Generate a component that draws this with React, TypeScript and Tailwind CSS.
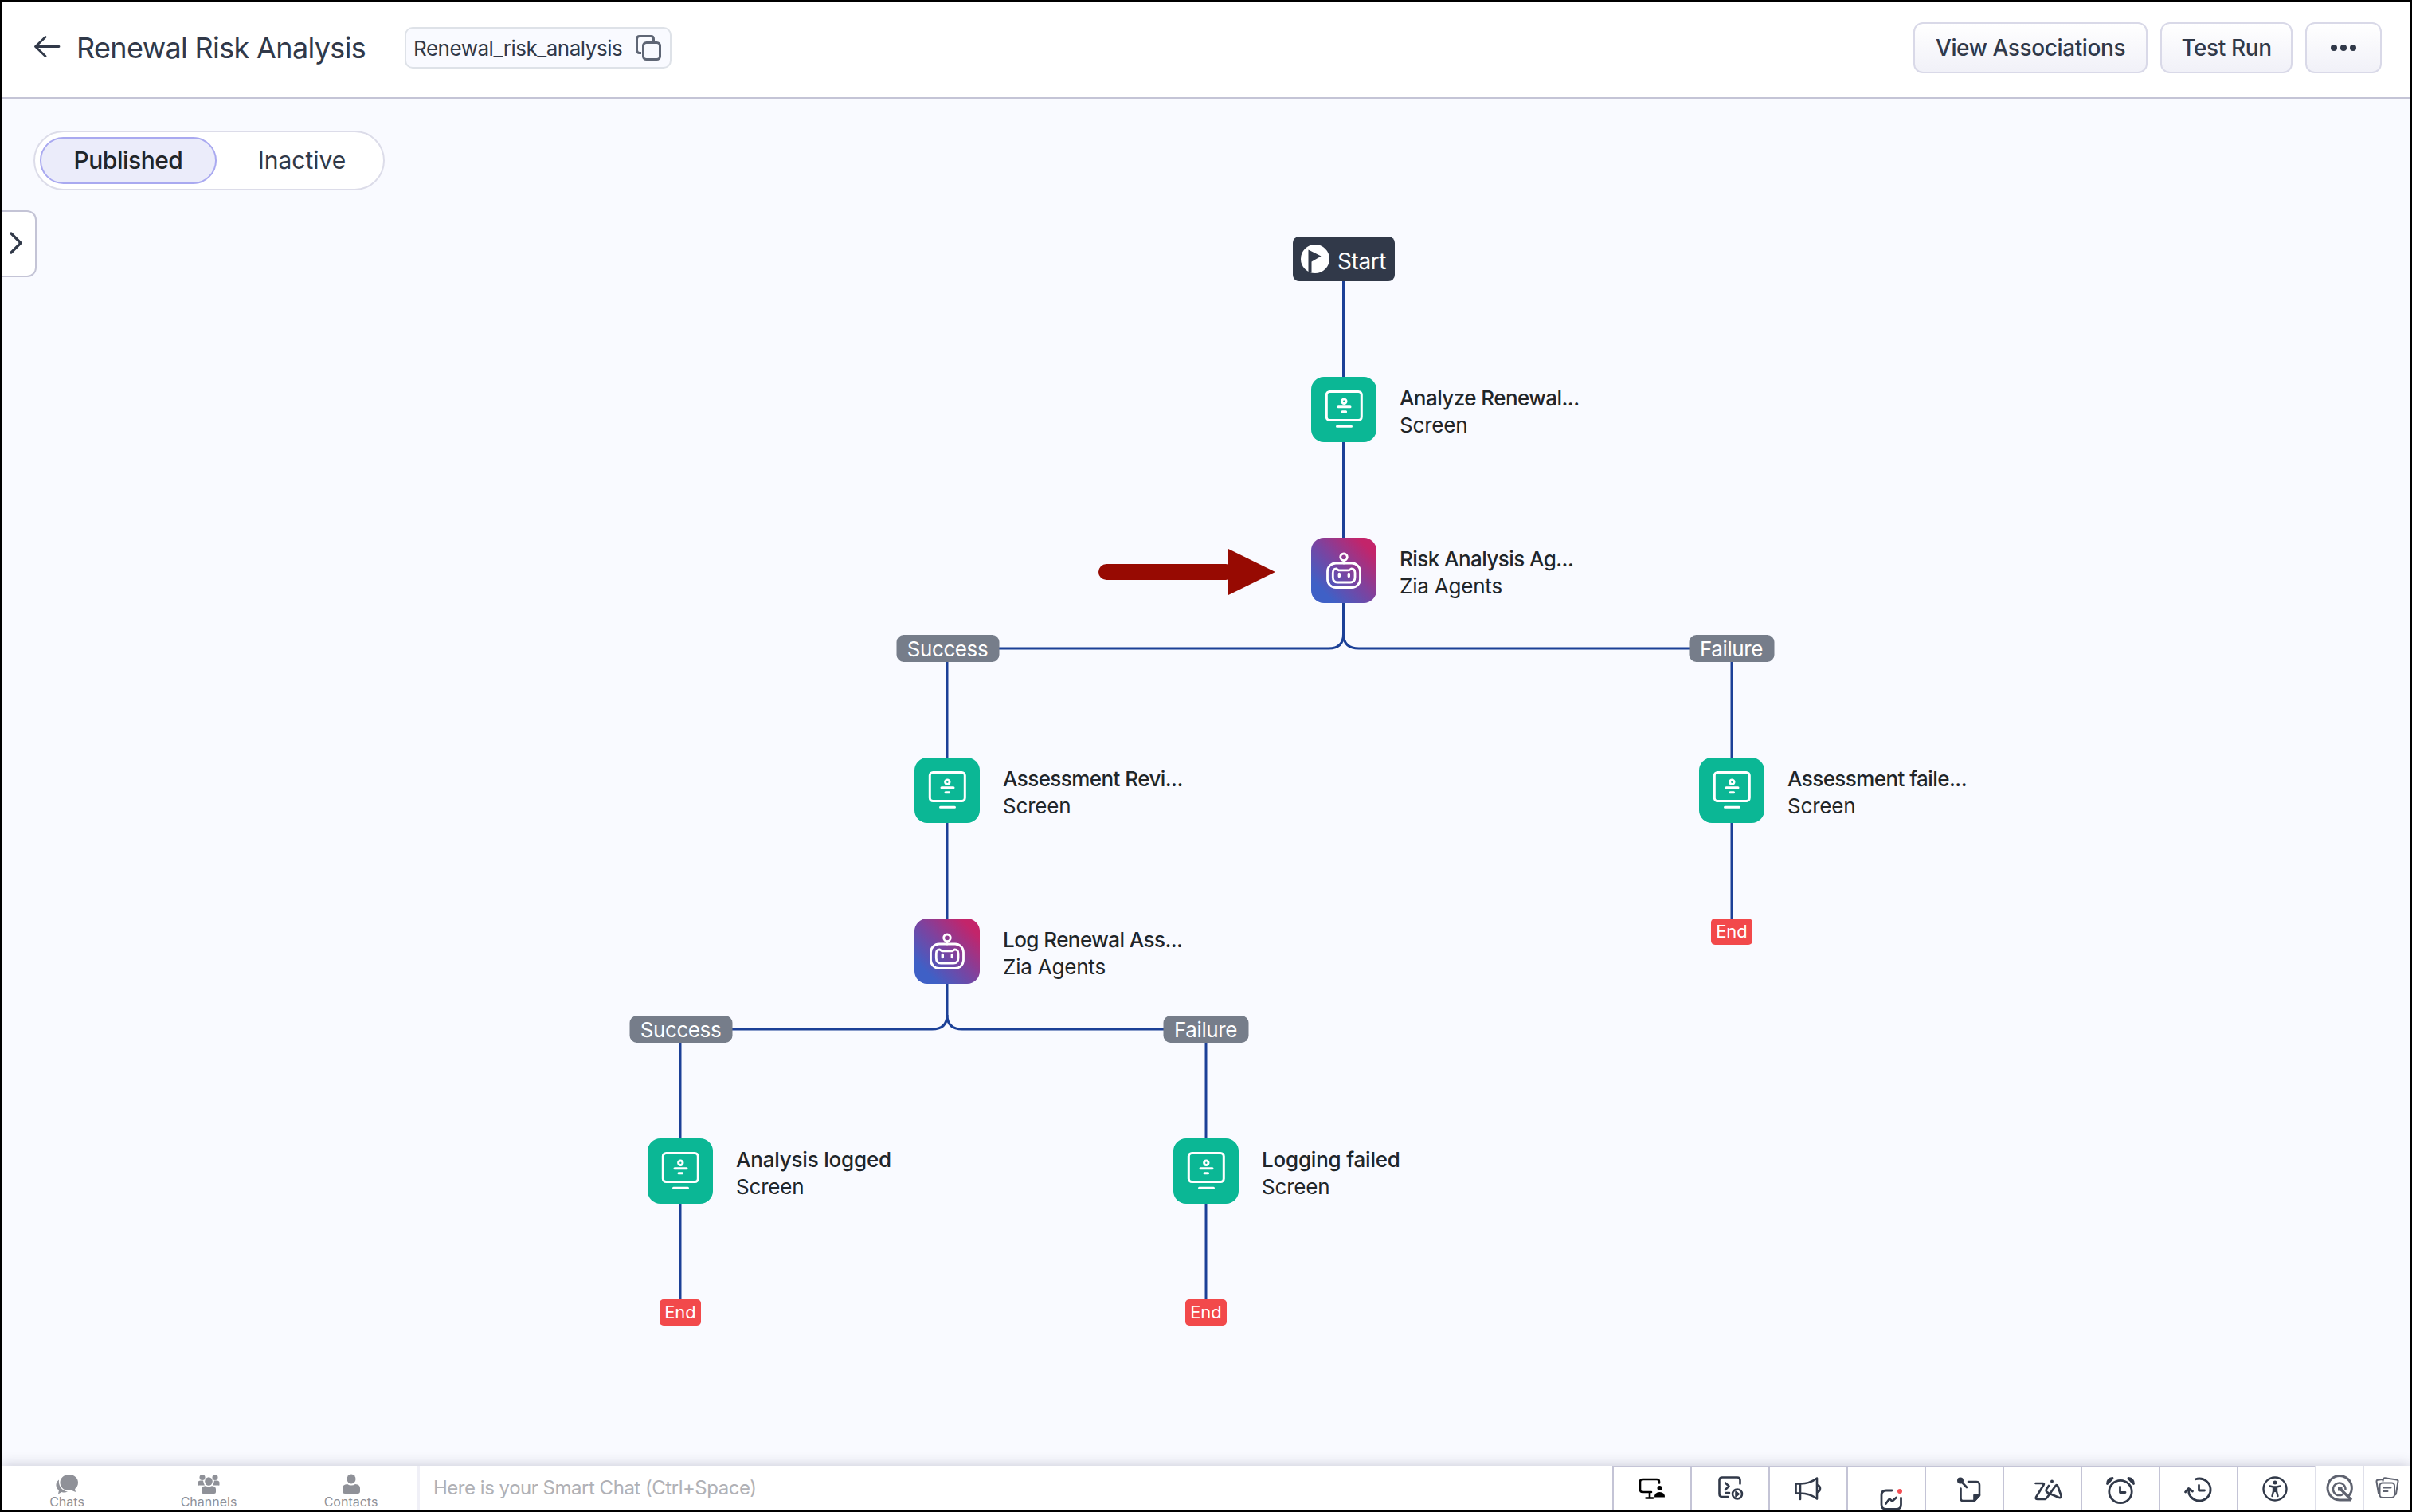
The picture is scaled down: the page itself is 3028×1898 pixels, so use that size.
import type { ReactNode } from 'react';

// ---------------------------------------------------------------------------
// Types
// ---------------------------------------------------------------------------

type NodeKind = 'screen' | 'agent';

interface FlowNodeData {
  id: string;
  kind: NodeKind;
  title: string;
  x: number;
  y: number;
}

interface TagData {
  id: string;
  label: string;
  x: number;
  y: number;
}

// ---------------------------------------------------------------------------
// Flow data. x is the centre line of an item, y its top edge
// ---------------------------------------------------------------------------

const NODES: FlowNodeData[] = [
  { id: 'analyze', kind: 'screen', title: 'Analyze Renewal...', x: 1685, y: 349 },
  { id: 'risk', kind: 'agent', title: 'Risk Analysis Ag...', x: 1685, y: 551 },
  { id: 'review', kind: 'screen', title: 'Assessment Revi...', x: 1187, y: 827 },
  { id: 'failed', kind: 'screen', title: 'Assessment faile...', x: 2172, y: 827 },
  { id: 'log', kind: 'agent', title: 'Log Renewal Ass...', x: 1187, y: 1029 },
  { id: 'logged', kind: 'screen', title: 'Analysis logged', x: 852, y: 1305 },
  { id: 'logging-failed', kind: 'screen', title: 'Logging failed', x: 1512, y: 1305 },
];

const BRANCHES: TagData[] = [
  { id: 'b1', label: 'Success', x: 1187.5, y: 673 },
  { id: 'b2', label: 'Failure', x: 2171.5, y: 673 },
  { id: 'b3', label: 'Success', x: 852.5, y: 1151 },
  { id: 'b4', label: 'Failure', x: 1511.5, y: 1151 },
];

const ENDS: TagData[] = [
  { id: 'e1', label: 'End', x: 2172, y: 1029 },
  { id: 'e2', label: 'End', x: 852, y: 1507 },
  { id: 'e3', label: 'End', x: 1512, y: 1507 },
];

const LINKS = [
  'M1684.5 229V349',
  'M1684.5 431V551',
  'M1684.5 633V672Q1684.5 690 1666 690H1250',
  'M1684.5 672Q1684.5 690 1704 690H2120',
  'M1187 706V827',
  'M1187 909V1029',
  'M2172 706V827',
  'M2172 909V1029',
  'M1187 1111V1150Q1187 1168 1168 1168H915',
  'M1187 1150Q1187 1168 1206 1168H1460',
  'M852 1184V1305',
  'M852 1387V1507',
  'M1512 1184V1305',
  'M1512 1387V1507',
];

// ---------------------------------------------------------------------------
// Icons
// ---------------------------------------------------------------------------

function ScreenIcon() {
  return (
    <svg width="82" height="82" viewBox="0 0 82 82" fill="none" stroke="white" strokeWidth="3" strokeLinecap="round">
      <rect x="19.3" y="18.5" width="44" height="36" rx="4" />
      <circle cx="41.3" cy="30.7" r="2.7" />
      <path d="M34 37.7H49M39 43.8H43.6M32.5 62.3H50.5" />
    </svg>
  );
}

function AgentIcon() {
  return (
    <svg width="82" height="82" viewBox="0 0 82 82" fill="none" stroke="white" strokeWidth="2.8" strokeLinecap="round" strokeLinejoin="round">
      <circle cx="41" cy="24.3" r="4.3" />
      <path d="M41 29V32" />
      <rect x="20.5" y="32" width="41" height="30.5" rx="10.5" />
      <path d="M31.5 38.8L34.500 40.800H47.500L50.500 38.800Q55 39 55 44V49.500Q55 56 49 56H33Q27.300 56 27.300 49.500V44Q27.300 39 31.500 38.800Z" />
      <path d="M35.3 45.5V48.5M47.3 45.5V48.5" strokeWidth="3.4" />
    </svg>
  );
}

function CopyIcon() {
  return (
    <svg width="34" height="34" viewBox="0 0 34 34" fill="none" stroke="#5f6675" strokeWidth="3">
      <rect x="10.5" y="10.5" width="21" height="21" rx="4" />
      <path d="M8 23.5H6Q2.5 23.5 2.5 20V6Q2.5 2.5 6 2.5H20Q23.5 2.5 23.5 6V8" />
    </svg>
  );
}

function PresenterIcon() {
  return (
    <svg width="36" height="36" viewBox="0 0 36 36" fill="none" stroke="black" strokeWidth="2.6" strokeLinecap="round">
      <path d="M17 21H6Q3 21 3 18V8Q3 5 6 5H24Q27 5 27 8V9.5M15 21V28M10.5 28.5H19" />
      <circle cx="27.5" cy="16" r="3" fill="black" stroke="none" />
      <path d="M21 27.5Q21 21 27.5 21T34 27.5Z" fill="black" stroke="none" />
    </svg>
  );
}

function ScriptRunIcon() {
  return (
    <svg width="36" height="36" viewBox="0 0 36 36" fill="none" stroke="#313949" strokeWidth="2.6" strokeLinecap="round" strokeLinejoin="round">
      <path d="M14.5 28H7Q3.5 28 3.5 24.5V7Q3.5 3.5 7 3.5H26Q29.5 3.5 29.5 7V11.5M11 10.5L15.5 14.5L11 19M11.5 23H16" />
      <circle cx="26" cy="24.5" r="6" />
      <path d="M24 21V28L28.5 24.5Z" strokeWidth="1.5" fill="#313949" />
    </svg>
  );
}

function MegaphoneIcon() {
  return (
    <svg width="36" height="36" viewBox="0 0 36 36" fill="none" stroke="#313949" strokeWidth="2.6" strokeLinecap="round" strokeLinejoin="round">
      <path d="M2.5 11.5V23.5H8Q20 23.5 29 30.5V4.5Q20 11.5 8 11.5ZM8 11.5V31M29 13Q33 14 33 17.5T29 22.5" />
    </svg>
  );
}

function TrendIcon() {
  return (
    <svg width="36" height="36" viewBox="0 0 36 36" fill="none" stroke="#313949" strokeWidth="2.8" strokeLinecap="round" strokeLinejoin="round">
      <path d="M18 5H11Q5 5 5 11V22.5Q5 28.5 11 28.5H23.5Q29.5 28.5 29.5 22.5V14.500M10.5 21.5L15 15.5L18.5 18.5L23.5 14" />
      <circle cx="28" cy="6" r="3" fill="#f44f55" stroke="none" />
    </svg>
  );
}

function StickyNoteIcon() {
  return (
    <svg width="36" height="36" viewBox="0 0 36 36" fill="none" stroke="#313949" strokeWidth="2.6" strokeLinecap="round" strokeLinejoin="round">
      <circle cx="7" cy="6.5" r="4" fill="#313949" stroke="none" />
      <path d="M7 6.5L15 15M17 8H27Q31 8 31 12V25L24.5 32H10Q7.5 32 7.5 29V16.5" />
      <path d="M31 25H24.5V32Z" fill="#313949" />
    </svg>
  );
}

function ZiaIcon() {
  return (
    <svg width="38" height="36" viewBox="0 0 38 36" fill="none" stroke="#313949" strokeWidth="2.7" strokeLinecap="round" strokeLinejoin="round">
      <path d="M3.5 10H13Q14.5 10 13.5 12L4 27.5Q3 30 6 30H14Q16.5 30 18.5 27L29 12.5Q30.5 11.5 31.5 14L35.5 25.5Q36 28.5 33 28L20 22.5Q15.5 20.5 17 17.5L20 13" />
      <circle cx="24" cy="7.5" r="2" fill="#313949" stroke="none" />
    </svg>
  );
}

function AlarmIcon() {
  return (
    <svg width="40" height="38" viewBox="0 0 40 38" fill="none" stroke="#313949" strokeWidth="2.8" strokeLinecap="round" strokeLinejoin="round">
      <circle cx="20" cy="20.5" r="14.2" />
      <path d="M19.5 14.5V21.5H26" />
      <path d="M3.5 10.5Q4 4 10 3.5Q7.5 6.5 3.5 10.5ZM36.5 10.5Q36 4 30 3.5Q32.5 6.5 36.5 10.5Z" fill="#313949" />
    </svg>
  );
}

function HistoryIcon() {
  return (
    <svg width="38" height="36" viewBox="0 0 38 36" fill="none" stroke="#313949" strokeWidth="2.8" strokeLinecap="round" strokeLinejoin="round">
      <path d="M15.5 4.7Q17.5 4 20 4A14 14 0 1 1 7 23L6.5 17M2.5 21L6.5 16.5L11.5 20M19.5 12.5V19H26.5" />
    </svg>
  );
}

function AccessibilityIcon() {
  return (
    <svg width="34" height="34" viewBox="0 0 34 34" fill="none" stroke="#313949" strokeWidth="2.4" strokeLinecap="round" strokeLinejoin="round">
      <circle cx="17" cy="17" r="14.5" />
      <circle cx="17" cy="9" r="2.5" fill="#313949" stroke="none" />
      <path d="M10.5 13.5L15 14.5H19L23.5 13.5M15 14.5V20L13.5 26M19 14.5V20L20.5 26M17 14.5V20" />
    </svg>
  );
}

function ZohoSearchIcon() {
  return (
    <svg width="38" height="38" viewBox="0 0 38 38" fill="none" stroke="#5f6370" strokeWidth="3" strokeLinejoin="round">
      <path d="M34 34H19A15.2 15.2 0 1 1 30 29.5" />
      <path d="M25 25A7.8 7.8 0 1 1 26.5 21" strokeWidth="2.4" />
      <path d="M20.5 20.5L34 34" strokeWidth="3.4" />
      <rect x="17" y="17" width="5.5" height="5.5" fill="#5f6370" stroke="none" />
    </svg>
  );
}

function CardsIcon() {
  return (
    <svg width="32" height="32" viewBox="0 0 32 32" fill="none" stroke="#5f6370" strokeWidth="2" strokeLinecap="round" strokeLinejoin="round">
      <path d="M10.5 7L11 4.5Q11.5 3 13 3.2L28 5.5Q29.8 6 29.5 7.5L27 23Q26.8 24.5 25 24.5M5 22.5L2.5 8Q2.3 6 4 5.8L10 5" />
      <rect x="6.5" y="9.5" width="18.5" height="18.5" rx="3.5" />
      <path d="M11 15.5H20.5M11 20H16.5" />
    </svg>
  );
}

function ChatsIcon() {
  return (
    <svg width="30" height="26" viewBox="0 0 30 26" fill="#8f9198">
      <path d="M17.5 1C24.500 1 29 5.500 29 11C29 14.500 27.500 17 25 19L26 23L20.500 20.800C11 22.500 6.500 16.500 6.500 11C6.500 5.500 11 1 17.500 1Z" />
      <path d="M5 7.500C4 15 8.500 21.500 16 22.500C13 24 10.500 23.800 8.500 23L4 25.500L5 20.800C.500 17.500 0 11 5 7.500Z" />
    </svg>
  );
}

function ChannelsIcon() {
  return (
    <svg width="30" height="26" viewBox="0 0 30 26" fill="#8f9198">
      <circle cx="7" cy="4.5" r="3.5" />
      <circle cx="23" cy="4.5" r="3.5" />
      <path d="M1.5 14V11Q1.5 8.5 5 8.5H8Q8.5 12 10 14.5H3Q1.5 15 1.5 14ZM28.5 14V11Q28.5 8.5 25 8.5H22Q21.5 12 20 14.5H27Q28.5 15 28.5 14Z" />
      <ellipse cx="15" cy="9.5" rx="4.8" ry="5.2" />
      <path d="M6 23V19.5Q6 15.5 11 15.2Q15 17.5 19 15.2Q24 15.5 24 19.5V23Q24 25 22 25H8Q6 25 6 23Z" />
    </svg>
  );
}

function ContactsIcon() {
  return (
    <svg width="26" height="26" viewBox="0 0 26 26" fill="#8f9198">
      <ellipse cx="13" cy="6.5" rx="5.5" ry="6" />
      <path d="M2 22V18Q2 13.5 8 13Q13 16 18 13Q24 13.5 24 18V22Q24 25 21 25H5Q2 25 2 22Z" />
    </svg>
  );
}

// ---------------------------------------------------------------------------
// Canvas items
// ---------------------------------------------------------------------------

function FlowNode({ node }: { node: FlowNodeData }) {
  const isScreen = node.kind === 'screen';
  const isCut = node.title.endsWith('...');
  return (
    <div className="absolute flex h-[82px] items-center" style={{ left: node.x - 41, top: node.y }}>
      <div
        className={`size-[82px] shrink-0 rounded-2xl ${
          isScreen ? 'bg-[#0bb795]' : 'bg-[linear-gradient(45deg,#3f60c6_18%,#7e429e_52%,#c3246a_86%)]'
        }`}
      >
        {isScreen ? <ScreenIcon /> : <AgentIcon />}
      </div>
      <div className="ml-[29px] whitespace-nowrap pt-1.5 text-[26px] leading-[34px] text-[#212529]">
        <p className={`font-medium ${isCut ? 'tracking-[-0.56px]' : 'tracking-[-0.2px]'}`}>{node.title}</p>
        <p className="tracking-[-0.2px]">{isScreen ? 'Screen' : 'Zia Agents'}</p>
      </div>
    </div>
  );
}

function BranchTag({ tag }: { tag: TagData }) {
  return (
    <div
      className={`absolute flex h-[34px] -translate-x-1/2 items-center justify-center rounded-[9px] bg-[#767d8a] text-[26px] tracking-[-0.4px] text-white ${
        tag.label === 'Success' ? 'w-[129px]' : 'w-[107px]'
      }`}
      style={{ left: tag.x, top: tag.y }}
    >
      {tag.label}
    </div>
  );
}

function EndTag({ tag }: { tag: TagData }) {
  return (
    <div
      className="absolute flex h-[33px] w-[52px] -translate-x-1/2 items-center justify-center rounded-[5px] bg-[#f2494b] text-[22px] text-white"
      style={{ left: tag.x, top: tag.y }}
    >
      {tag.label}
    </div>
  );
}

// ---------------------------------------------------------------------------
// Page sections
// ---------------------------------------------------------------------------

function HeaderButton({ children, className }: { children: ReactNode; className: string }) {
  return (
    <button
      className={`flex h-16 items-center justify-center whitespace-nowrap rounded-xl border-2 border-[#d9d9e8] bg-linear-to-b from-white to-[#f1f1f8] text-[28px] font-medium tracking-[-0.4px] text-[#313949] ${className}`}
    >
      {children}
    </button>
  );
}

function Header() {
  return (
    <header className="flex h-[122px] shrink-0 items-start border-b-2 border-[#c4c4d6] bg-white pl-10 pr-9">
      <div className="flex h-[116px] items-center">
        <svg width="36" height="30" viewBox="0 0 36 30" fill="none" stroke="#313949" strokeWidth="2.8" strokeLinecap="round" strokeLinejoin="round">
          <path d="M32 13.5H2.5M15 1.500L2.5 13.5L15 25.500" />
        </svg>
        <h1 className="ml-[18px] w-[412px] whitespace-nowrap text-[36px] tracking-[-0.65px] text-[#313949]">
          Renewal Risk Analysis
        </h1>
        <div className="flex h-[52px] w-[335px] items-center justify-between rounded-[10px] border-2 border-[#dee2e8] bg-[#f9faff] pl-[9px] pr-[10px] text-[26px] tracking-[-0.47px] text-[#313949]">
          <span>Renewal_risk_analysis</span>
          <CopyIcon />
        </div>
      </div>
      <div className="ml-auto flex gap-4 pt-[26px]">
        <HeaderButton className="w-[294px]">View Associations</HeaderButton>
        <HeaderButton className="w-[166px]">Test Run</HeaderButton>
        <HeaderButton className="w-24">
          <svg width="34" height="10" viewBox="0 0 34 10" fill="#313949">
            <circle cx="5" cy="5" r="4" />
            <circle cx="17" cy="5" r="4" />
            <circle cx="29" cy="5" r="4" />
          </svg>
        </HeaderButton>
      </div>
    </header>
  );
}

function StatusToggle() {
  return (
    <div className="flex h-[75px] w-[441px] items-center rounded-full border-2 border-[#dcdce9] bg-white pl-[6px] text-[30px]">
      <div className="flex h-[59px] w-[222px] items-center justify-center rounded-full border-2 border-[#a9a9f0] bg-[#ebecfa] font-medium tracking-[-0.5px] text-[#212529]">
        Published
      </div>
      <div className="flex flex-1 items-center justify-center pl-[5px] text-[#313949]">Inactive</div>
    </div>
  );
}

function Canvas() {
  return (
    <main className="relative flex-1 overflow-hidden bg-[#f9faff]">
      <div className="flex flex-col items-start gap-[25px] pt-10">
        <div className="pl-10">
          <StatusToggle />
        </div>
        <button className="flex h-[84px] w-11 items-center rounded-r-xl border-2 border-l-0 border-[#c4c4d6] bg-white pb-[3px] pl-[9px]">
          <svg width="18" height="30" viewBox="0 0 18 30" fill="none" stroke="#313949" strokeWidth="3.2" strokeLinecap="round" strokeLinejoin="round">
            <path d="M3 3L15 15L3 27" />
          </svg>
        </button>
      </div>

      <svg className="absolute left-0 top-0" width="3024" height="1716" fill="none" stroke="#1c4097" strokeWidth="3">
        {LINKS.map((d) => (
          <path key={d} d={d} />
        ))}
        {/* Callout arrow */}
        <g fill="#970a02" stroke="none">
          <rect x="1377" y="584" width="170" height="20" rx="10" />
          <path d="M1540 565L1599 594L1540 623Z" />
        </g>
      </svg>

      {/* Start */}
      <div className="absolute left-[1621px] top-[173px] flex h-14 w-32 items-center rounded-lg bg-[#313949] pl-2.5">
        <svg width="36" height="36" viewBox="0 0 36 36">
          <circle cx="18" cy="18" r="18" fill="white" />
          <path d="M9.5 6.5L25.5 14.5L13.5 21.5V35H9.5Z" fill="#313949" />
        </svg>
        <span className="ml-[10px] pt-[5px] text-[28px] tracking-[-0.4px] text-white">Start</span>
      </div>

      {NODES.map((n) => (
        <FlowNode key={n.id} node={n} />
      ))}
      {BRANCHES.map((t) => (
        <BranchTag key={t.id} tag={t} />
      ))}
      {ENDS.map((t) => (
        <EndTag key={t.id} tag={t} />
      ))}
    </main>
  );
}

const CHAT_TABS = [
  { label: 'Chats', icon: <ChatsIcon />, width: 'w-[164px]' },
  { label: 'Channels', icon: <ChannelsIcon />, width: 'w-[192px]' },
  { label: 'Contacts', icon: <ContactsIcon />, width: 'w-[165px]' },
];

const TOOLS = [
  { id: 'presenter', icon: <PresenterIcon />, pad: 'pt-2.5' },
  { id: 'script', icon: <ScriptRunIcon />, pad: 'pl-0.5 pt-[9px]' },
  { id: 'announce', icon: <MegaphoneIcon />, pad: 'pt-[9px]' },
  { id: 'trend', icon: <TrendIcon />, pad: 'pl-3.5 pt-6' },
  { id: 'note', icon: <StickyNoteIcon />, pad: 'pl-[11px] pt-2.5' },
  { id: 'zia', icon: <ZiaIcon />, pad: 'pl-3.5 pt-2.5' },
  { id: 'alarm', icon: <AlarmIcon />, pad: 'pt-2.5' },
  { id: 'history', icon: <HistoryIcon />, pad: 'pt-2.5' },
  { id: 'a11y', icon: <AccessibilityIcon />, pad: 'pr-1 pt-2.5' },
];

function BottomBar() {
  return (
    <footer className="relative flex h-14 shrink-0 bg-white shadow-[0_-2px_14px_rgba(60,60,90,0.22)]">
      <nav className="flex w-[521px] text-[16px] text-[#8f9198]">
        {CHAT_TABS.map((t) => (
          <div key={t.label} className={`flex flex-col items-center pt-2.5 leading-[19px] ${t.width}`}>
            {t.icon}
            {t.label}
          </div>
        ))}
      </nav>
      <div className="flex flex-1 items-center border-l-4 border-[#f0f0f7] pl-[17px] text-[24px] tracking-[-0.48px] text-[#b0b1b6]">
        Here is your Smart Chat (Ctrl+Space)
      </div>
      <div className="flex">
        {TOOLS.map((t) => (
          <div
            key={t.id}
            className={`flex w-[98px] justify-center overflow-hidden border-l-2 border-t-2 border-[#c4c4d6] ${t.pad}`}
          >
            {t.icon}
          </div>
        ))}
        <div className="flex w-[60px] items-center justify-center border-l-2 border-[#dfe0ea]">
          <ZohoSearchIcon />
        </div>
        <div className="flex w-[60px] items-center justify-center border-l-2 border-[#dfe0ea]">
          <CardsIcon />
        </div>
      </div>
    </footer>
  );
}

export default function App() {
  return (
    <div className="flex h-[1898px] w-[3028px] flex-col overflow-hidden border-2 border-black bg-white font-['Inter',sans-serif]">
      <Header />
      <Canvas />
      <BottomBar />
    </div>
  );
}
